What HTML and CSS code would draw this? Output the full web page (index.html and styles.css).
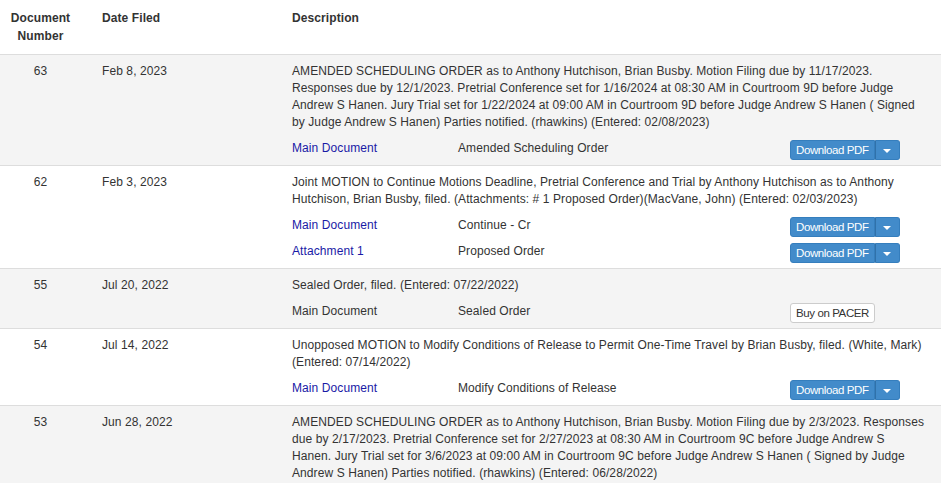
FILE: index.html
```html
<!DOCTYPE html>
<html lang="en">

<head>
  <meta charset="UTF-8">
  <meta name="viewport" content="width=device-width, initial-scale=1.0">
  <title>Docket Entries</title>

  <link rel="stylesheet" href="styles.css">
</head>

<body>
  <table class="docket">
    <colgroup>
      <col class="col-num">
      <col class="col-date">
      <col class="col-desc">
    </colgroup>
    <thead>
      <tr>
        <th class="num">Document Number</th>
        <th class="date">Date Filed</th>
        <th class="desc">Description</th>
      </tr>
    </thead>
    <tbody>
      <tr>
        <td class="num">63</td>
        <td class="date">Feb 8, 2023</td>
        <td class="desc">
          <div class="entry-text">AMENDED SCHEDULING ORDER as to Anthony Hutchison, Brian Busby. Motion Filing due by 11/17/2023. Responses due by 12/1/2023. Pretrial Conference set for 1/16/2024 at 08:30 AM in Courtroom 9D before Judge Andrew S Hanen. Jury Trial set for 1/22/2024 at 09:00 AM in Courtroom 9D before Judge Andrew S Hanen ( Signed by Judge Andrew S Hanen) Parties notified. (rhawkins) (Entered: 02/08/2023)</div>
          <div class="doc">
            <a class="doc-name" href="#">Main Document</a>
            <span class="doc-title">Amended Scheduling Order</span>
            <span class="btn-group">
              <button class="btn btn-primary">Download PDF</button><button class="btn btn-primary toggle"><span class="caret"></span></button>
            </span>
          </div>
        </td>
      </tr>
      <tr>
        <td class="num">62</td>
        <td class="date">Feb 3, 2023</td>
        <td class="desc">
          <div class="entry-text">Joint MOTION to Continue Motions Deadline, Pretrial Conference and Trial by Anthony Hutchison as to Anthony Hutchison, Brian Busby, filed. (Attachments: # 1 Proposed Order)(MacVane, John) (Entered: 02/03/2023)</div>
          <div class="doc">
            <a class="doc-name" href="#">Main Document</a>
            <span class="doc-title">Continue - Cr</span>
            <span class="btn-group">
              <button class="btn btn-primary">Download PDF</button><button class="btn btn-primary toggle"><span class="caret"></span></button>
            </span>
          </div>
          <div class="doc">
            <a class="doc-name" href="#">Attachment 1</a>
            <span class="doc-title">Proposed Order</span>
            <span class="btn-group">
              <button class="btn btn-primary">Download PDF</button><button class="btn btn-primary toggle"><span class="caret"></span></button>
            </span>
          </div>
        </td>
      </tr>
      <tr>
        <td class="num">55</td>
        <td class="date">Jul 20, 2022</td>
        <td class="desc">
          <div class="entry-text">Sealed Order, filed. (Entered: 07/22/2022)</div>
          <div class="doc">
            <span class="doc-name">Main Document</span>
            <span class="doc-title">Sealed Order</span>
            <span class="btn-group">
              <button class="btn btn-default">Buy on PACER</button>
            </span>
          </div>
        </td>
      </tr>
      <tr>
        <td class="num">54</td>
        <td class="date">Jul 14, 2022</td>
        <td class="desc">
          <div class="entry-text">Unopposed MOTION to Modify Conditions of Release to Permit One-Time Travel by Brian Busby, filed. (White, Mark) (Entered: 07/14/2022)</div>
          <div class="doc">
            <a class="doc-name" href="#">Main Document</a>
            <span class="doc-title">Modify Conditions of Release</span>
            <span class="btn-group">
              <button class="btn btn-primary">Download PDF</button><button class="btn btn-primary toggle"><span class="caret"></span></button>
            </span>
          </div>
        </td>
      </tr>
      <tr>
        <td class="num">53</td>
        <td class="date">Jun 28, 2022</td>
        <td class="desc">
          <div class="entry-text">AMENDED SCHEDULING ORDER as to Anthony Hutchison, Brian Busby. Motion Filing due by 2/3/2023. Responses due by 2/17/2023. Pretrial Conference set for 2/27/2023 at 08:30 AM in Courtroom 9C before Judge Andrew S Hanen. Jury Trial set for 3/6/2023 at 09:00 AM in Courtroom 9C before Judge Andrew S Hanen ( Signed by Judge Andrew S Hanen) Parties notified. (rhawkins) (Entered: 06/28/2022)</div>
        </td>
      </tr>
    </tbody>
  </table>
</body>

</html>
```

FILE: styles.css
```css
body {
  color: #333;
  font-family: "Liberation Sans", Arial, sans-serif;
  font-size: 12px;
  letter-spacing: 0.09px;
  line-height: 17px;
  margin: 0;
}

.docket {
  border-collapse: collapse;
  table-layout: fixed;
  width: 941px;
}

.col-num {
  width: 81px;
}

.col-date {
  width: 211px;
}

th {
  font-weight: bold;
  line-height: 18px;
  padding: 9px 10px;
  text-align: left;
  vertical-align: top;
}

th.num,
td.num {
  text-align: center;
}

th.date,
td.date {
  padding-left: 21px;
}

th.desc,
td.desc {
  padding-left: 0;
}

thead tr {
  border-bottom: 1px solid #ddd;
}

tbody tr {
  border-bottom: 1px solid #ddd;
}

tbody tr:nth-child(odd) {
  background: #f4f4f4;
}

td {
  padding: 8px 10px 2px;
  vertical-align: top;
}

td.desc {
  padding-right: 17px;
}

.entry-text {
  margin-bottom: 6px;
}

.doc {
  display: flex;
  align-items: flex-start;
  height: 26px;
}

.doc-name {
  padding-top: 3px;
  width: 166px;
}

a.doc-name {
  color: #1a1aa6;
  text-decoration: none;
}

.doc-title {
  padding-top: 3px;
  width: 332px;
}

.btn-group {
  display: flex;
  margin-top: 3px;
}

.btn {
  border: 1px solid transparent;
  border-radius: 3px;
  font-family: "Liberation Sans", Arial, sans-serif;
  font-size: 11.5px;
  height: 20px;
  letter-spacing: -0.4px;
  line-height: 16px;
  padding: 1px 5px;
}

.btn-primary {
  background: #428bca;
  border-color: #357ebd;
  color: #fff;
}

.btn-primary:first-child:not(:last-child) {
  border-bottom-right-radius: 0;
  border-top-right-radius: 0;
}

.btn-primary.toggle {
  border-bottom-left-radius: 0;
  border-left-color: #3071a9;
  border-top-left-radius: 0;
  padding: 1px 0;
  width: 25px;
}

.caret {
  border-left: 4px solid transparent;
  border-right: 4px solid transparent;
  border-top: 4px solid #fff;
  display: inline-block;
  vertical-align: middle;
}

.btn-default {
  background: #fff;
  border-color: #ccc;
  color: #333;
}
```
